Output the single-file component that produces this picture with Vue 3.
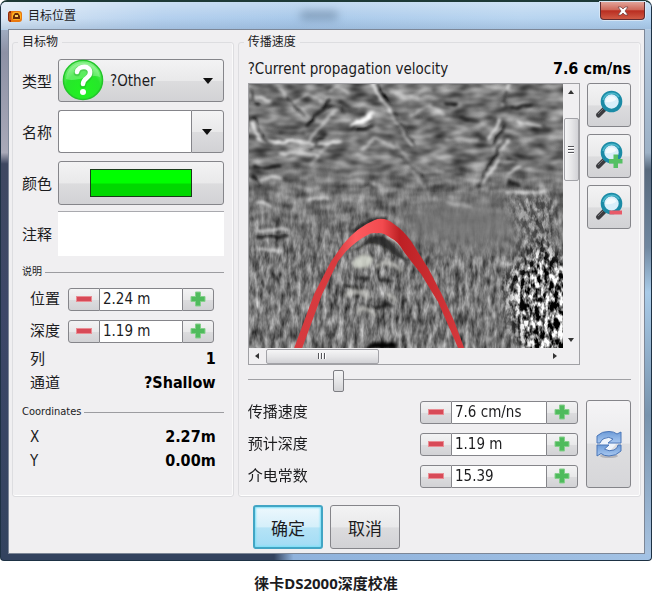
<script setup>
import { ref, reactive } from 'vue'

const kind = ref('?Other')
const name = ref('')
const note = ref('')
const sliderValue = ref(23)

const description = reactive([
  { id: 'position', label: '位置', value: '2.24 m' },
  { id: 'depth', label: '深度', value: '1.19 m' },
])
const facts = [
  { label: '列', value: '1' },
  { label: '通道', value: '?Shallow' },
]
const coordinates = [
  { label: 'X', value: '2.27m' },
  { label: 'Y', value: '0.00m' },
]
const params = reactive([
  { id: 'velocity', label: '传播速度', value: '7.6 cm/ns', step: 0.1, digits: 1 },
  { id: 'expected', label: '预计深度', value: '1.19 m', step: 0.01, digits: 2 },
  { id: 'dielectric', label: '介电常数', value: '15.39', step: 0.01, digits: 2 },
])
const zoomTools = [
  { id: 'reset', label: '缩放' },
  { id: 'in', label: '放大' },
  { id: 'out', label: '缩小' },
]

function bump(item, direction) {
  const [number, ...unit] = item.value.split(' ')
  const next = (parseFloat(number) + direction * (item.step ?? 0.01)).toFixed(item.digits ?? 2)
  item.value = [next, ...unit].join(' ')
}
</script>

<template>
  <main class="page">
    <section class="window">
      <header class="titlebar">
        <svg class="app-icon" viewBox="0 0 14 12" aria-hidden="true">
          <rect x="0" y="1" width="14" height="11" rx="3" fill="#e9780f" />
          <path d="M3 1H2Q0 2 0 4v5q0 2 2 3h1Z" fill="#8e2a10" />
          <rect x="4" y="2" width="9" height="8" rx="3" fill="#ffb321" />
          <path d="M5 9V6l2-3h3l2 3v3H5Z" fill="#6b2c08" />
          <path d="M7 5h3v2H7Z" fill="#ffd35a" />
          <path d="M2 3v7" stroke="#e98a2e" />
        </svg>
        <h1 class="title">目标位置</h1>
        <span class="smudge"></span>
        <button class="close" type="button" aria-label="关闭">
          <svg viewBox="0 0 12 10" aria-hidden="true">
            <path d="M1 1h3l2 2 2-2h3L8 5l3 4H8L6 7 4 9H1l3-4Z" fill="#fff" stroke="#6d3a3a" stroke-width=".7" />
          </svg>
        </button>
      </header>

      <div class="body">
        <div class="groups">
          <fieldset class="group">
            <legend>目标物</legend>
            <div class="form">
              <label for="kind">类型</label>
              <div class="kind">
                <select id="kind" v-model="kind">
                  <option>?Other</option>
                </select>
                <svg class="kind-icon" viewBox="0 0 42 42" aria-hidden="true">
                  <defs>
                    <radialGradient id="ball" cx=".5" cy=".75" r=".75">
                      <stop offset="0" stop-color="#21f321" />
                      <stop offset=".6" stop-color="#27e62b" />
                      <stop offset="1" stop-color="#8df28d" />
                    </radialGradient>
                  </defs>
                  <circle cx="21" cy="21" r="19.5" fill="url(#ball)" stroke="#23c52a" stroke-width="1.6" />
                  <path d="M4 20C5 8 14 4 21 4s16 4 17 14C29 14 15 24 4 20Z" fill="#fff" opacity=".25" />
                  <path d="M15 14c1-7 14-7 13 1 0 5-7 5-7 11" fill="none" stroke="#26a72b" stroke-width="6.5" stroke-linecap="round" opacity=".4" />
                  <path d="M15 13c1-7 14-7 13 1 0 5-7 5-7 11" fill="none" stroke="#fff" stroke-width="4.6" stroke-linecap="round" />
                  <circle cx="21" cy="33" r="3" fill="#fff" />
                </svg>
                <svg class="arrow over" viewBox="0 0 10 6" aria-hidden="true"><path d="M0 0h10L5 6Z" fill="#111" /></svg>
              </div>

              <label for="name">名称</label>
              <div class="combo">
                <input id="name" v-model="name" type="text" />
                <button type="button" aria-label="展开">
                  <svg class="arrow" viewBox="0 0 10 6" aria-hidden="true"><path d="M0 0h10L5 6Z" fill="#111" /></svg>
                </button>
              </div>

              <label for="color">颜色</label>
              <button id="color" class="color" type="button"><span class="swatch"></span></button>

              <label for="note">注释</label>
              <textarea id="note" v-model="note"></textarea>
            </div>

            <h2 class="divider">说明</h2>
            <div class="details">
              <div v-for="item in description" :key="item.id" class="spin-row">
                <label :for="item.id">{{ item.label }}</label>
                <div class="spin">
                  <button type="button" aria-label="减少" @click="bump(item, -1)"><span class="minus"></span></button>
                  <input :id="item.id" v-model="item.value" type="text" />
                  <button type="button" aria-label="增加" @click="bump(item, 1)">
                    <svg class="plus" viewBox="0 0 16 16" aria-hidden="true"><path d="M5.500 1h5v4.500H15v5h-4.500V15h-5v-4.500H1v-5h4.500Z" fill="#4fbb5c" stroke="#86cf8c" /></svg>
                  </button>
                </div>
              </div>
            </div>
            <dl class="facts">
              <div v-for="fact in facts" :key="fact.label"><dt>{{ fact.label }}</dt><dd>{{ fact.value }}</dd></div>
            </dl>

            <h2 class="divider latin">Coordinates</h2>
            <dl class="facts">
              <div v-for="fact in coordinates" :key="fact.label"><dt>{{ fact.label }}</dt><dd>{{ fact.value }}</dd></div>
            </dl>
          </fieldset>

          <fieldset class="group">
            <legend>传播速度</legend>
            <p class="current"><span>?Current propagation velocity</span><strong>7.6 cm/ns</strong></p>

            <div class="viewer">
              <div class="scan">
                <svg class="radargram" viewBox="0 0 314 264" preserveAspectRatio="none" role="img" aria-label="雷达剖面">
                  <defs>
                    <filter id="layers" x="0" y="0" width="1" height="1" color-interpolation-filters="sRGB">
                      <feTurbulence type="fractalNoise" baseFrequency=".05 .1" numOctaves="2" seed="21" />
                      <feColorMatrix values=".8 0 0 0 .06  .8 0 0 0 .06  .8 0 0 0 .06  0 0 0 0 1" />
                    </filter>
                    <filter id="grain" x="0" y="0" width="1" height="1" color-interpolation-filters="sRGB">
                      <feTurbulence type="fractalNoise" baseFrequency=".19 .07" numOctaves="3" seed="4" />
                      <feColorMatrix values="1 0 0 0 -.03  1 0 0 0 -.03  1 0 0 0 -.03  0 0 0 0 1" />
                    </filter>
                    <filter id="speckle" x="0" y="0" width="1" height="1" color-interpolation-filters="sRGB">
                      <feTurbulence type="fractalNoise" baseFrequency=".21 .11" numOctaves="3" seed="15" />
                      <feColorMatrix values="3.2 0 0 0 -1.15  3.2 0 0 0 -1.15  3.2 0 0 0 -1.15  0 0 0 0 1" />
                    </filter>
                    <filter id="rough" x="-.1" y="-.1" width="1.2" height="1.2">
                      <feTurbulence type="fractalNoise" baseFrequency=".1" numOctaves="2" seed="3" result="n" />
                      <feDisplacementMap in="SourceGraphic" in2="n" scale="6" xChannelSelector="R" yChannelSelector="G" />
                      <feGaussianBlur stdDeviation="1.5" />
                    </filter>
                    <filter id="soft"><feGaussianBlur stdDeviation="12" /></filter>
                    <filter id="edge"><feGaussianBlur stdDeviation="8" /></filter>
                    <filter id="hair"><feGaussianBlur stdDeviation=".8" /></filter>
                    <linearGradient id="fade" x1="0" y1="0" x2="0" y2="1">
                      <stop offset=".3" stop-color="#000" />
                      <stop offset=".68" stop-color="#fff" />
                    </linearGradient>
                    <mask id="lower"><rect width="314" height="264" fill="url(#fade)" /></mask>
                    <mask id="corner">
                      <g filter="url(#edge)" fill="#fff">
                        <path d="M258 112h48v70h24v110h-50l-18-60-8-36 26-20Z" opacity=".4" />
                        <path d="M258 190l32-30 40 26v110h-44l-24-56Z" />
                      </g>
                    </mask>
                    <linearGradient id="arc" x1="45" y1="0" x2="215" y2="0" gradientUnits="userSpaceOnUse">
                      <stop offset="0" stop-color="#d63a3e" />
                      <stop offset=".25" stop-color="#d83b3f" />
                      <stop offset=".36" stop-color="#fb5c60" />
                      <stop offset=".52" stop-color="#f24a4e" />
                      <stop offset=".62" stop-color="#bd2024" />
                      <stop offset="1" stop-color="#d63a3e" />
                    </linearGradient>
                  </defs>
                  <rect width="314" height="264" filter="url(#layers)" />
                  <g mask="url(#lower)"><rect width="314" height="264" filter="url(#grain)" opacity=".85" /></g>
                  <ellipse cx="215" cy="140" rx="68" ry="26" fill="#777" opacity=".85" filter="url(#soft)" />
                  <g mask="url(#corner)"><rect width="314" height="264" filter="url(#speckle)" /></g>

                  <g filter="url(#rough)" fill="none">
                    <g stroke="#f0f0f0" stroke-width="3">
                      <path d="M8 54q12 6 24 4t28 1 32-2M2 40l8 12M122 0l16 22 26 40" />
                      <path d="M58 58l22-26 10-10M80 6q10-6 20 4M30 4l30 30" opacity=".6" />
                      <path d="M8 98q12-6 26-4M58 118q10-8 22-2M6 146h34M8 166h26M0 10l22 8M6 118l18 4M30 70q16-4 40 2" opacity=".75" />
                      <path d="M260 0l-8 22M252 34l-14 24M260 56l-8 10M250 74l-16 24" opacity=".85" />
                      <path d="M256 108h40M258 90l14-8M268 38l24 4" opacity=".8" />
                      <path d="M112 66l14-12 20 10M160 32l20-10 16 10M40 20l18-10 14 8M140 8l30 6M196 56h34" opacity=".55" />
                      <path d="M196 118l26 6M146 58l30 46M60 82l20-22M90 100q14-8 26 0M160 12l22-6" opacity=".4" />
                    </g>
                    <g stroke="#000" stroke-width="3">
                      <path d="M126 0l15 23" stroke-width="4" />
                      <path d="M2 6l8 16M4 34l10 22 12 5M60 40l20-24" opacity=".75" />
                      <path d="M4 84l28-2M4 92l8 8M6 153l34-1M196 20h12M66 36l-10 6" opacity=".9" />
                      <path d="M258 6l-5 14M254 42l-10 18M256 56l-18 28-8 20M143 28l22 34" opacity=".75" />
                      <path d="M106 46l18-3M262 24l22-3M258 98l14 4M258 74l10 3M38 12l18 20" opacity=".8" />
                      <path d="M60 68l16-18M112 104q6-8 14 2M150 70l24 24M74 26q10-10 22 2M30 48l26 2M90 18l16 8M210 34l20 4" opacity=".5" />
                      <path d="M106 194h14M130 196h16M122 222h16M96 202l14 4M134 218l10 4" opacity=".7" />
                    </g>
                    <path d="M102 42q14-14 22-13-4 10-22 13Z" fill="#fff" stroke="#fff" stroke-width="2" />
                    <path d="M104 178q9-10 20-4-4 12-18 10Z" fill="#d9dcd2" stroke="#c9ccc2" stroke-width="2" opacity=".85" />
                    <path d="M108 228q10-7 18 2M128 182q12-8 24 6M94 212q16-8 26 0M136 210l12 6" stroke="#d2d2cd" stroke-width="4" opacity=".65" />
                    <path d="M117 264q14-7 30-1" stroke="#000" stroke-width="5" />
                  </g>
                  <g filter="url(#hair)">
                    <path d="M104 148q16-14 34-13" fill="none" stroke="#161616" stroke-width="4" opacity=".8" />
                    <path d="M97 168q14-3 22-14 10-5 19 0l22 24q-12-4-22-13-12-8-22-4-8 6-19 7Z" fill="#20211e" opacity=".8" />
                    <path d="M139 152q12 5 22 21" fill="none" stroke="#ddd6d2" stroke-width="3" />
                  </g>
                  <path d="M45 264 65 210 82 177 94 160Q108 143 125 136q10-4 20 4 9 6 17 17l17 27 13 25 13 28 10 27h-6l-20-46-17-28-17-22q-7-12-13-14-8-6-14-5-6-1-10 2-10 5-21 16L89 177 73 210 53 264Z" fill="url(#arc)" />
                </svg>
                <div class="scroll vertical">
                  <button type="button" aria-label="向上"><svg viewBox="0 0 6 4" aria-hidden="true"><path d="M0 4 3 0l3 4Z" fill="#333" /></svg></button>
                  <span class="thumb"><i></i><i></i><i></i></span>
                  <button type="button" aria-label="向下"><svg viewBox="0 0 6 4" aria-hidden="true"><path d="M0 0h6L3 4Z" fill="#333" /></svg></button>
                </div>
                <div class="scroll horizontal">
                  <button type="button" aria-label="向左"><svg viewBox="0 0 4 6" aria-hidden="true"><path d="M4 0 0 3l4 3Z" fill="#333" /></svg></button>
                  <span class="thumb"><i></i><i></i><i></i></span>
                  <button type="button" aria-label="向右"><svg viewBox="0 0 4 6" aria-hidden="true"><path d="M0 0l4 3-4 3Z" fill="#333" /></svg></button>
                </div>
              </div>

              <div class="tools">
                <button v-for="tool in zoomTools" :key="tool.id" type="button" :aria-label="tool.label">
                  <svg viewBox="0 0 32 32" aria-hidden="true">
                    <path d="M12 19.500 5.500 26" stroke="#3c3c40" stroke-width="5" stroke-linecap="round" />
                    <path d="M11 19 5 25" stroke="#77777b" stroke-width="1" />
                    <circle cx="18.500" cy="12.500" r="9" fill="#d9effa" stroke="#1b8ba6" stroke-width="3.600" />
                    <path d="M10 11a9 9 0 0 1 16-3" fill="none" stroke="#4cb8cc" stroke-width="1.500" />
                    <path d="M12.500 13a6 6 0 0 1 11-3q-4 4-11 3Z" fill="#fff" opacity=".65" />
                    <path v-if="tool.id === 'in'" d="M20.500 14.500h4.500v4.500h4.500v4.500H25V28h-4.500v-4.500H16V19h4.500Z" fill="#55c063" />
                    <path v-if="tool.id === 'out'" d="M16.500 19.500H29v4H16.500Z" fill="#e85a68" />
                  </svg>
                </button>
              </div>
            </div>

            <input v-model="sliderValue" class="slider" type="range" min="0" max="100" aria-label="传播速度" />

            <div class="params">
              <div class="param-list">
                <div v-for="item in params" :key="item.id" class="spin-row wide">
                  <label :for="item.id">{{ item.label }}</label>
                  <div class="spin">
                    <button type="button" aria-label="减少" @click="bump(item, -1)"><span class="minus"></span></button>
                    <input :id="item.id" v-model="item.value" type="text" />
                    <button type="button" aria-label="增加" @click="bump(item, 1)">
                      <svg class="plus" viewBox="0 0 16 16" aria-hidden="true"><path d="M5.500 1h5v4.500H15v5h-4.500V15h-5v-4.500H1v-5h4.500Z" fill="#4fbb5c" stroke="#86cf8c" /></svg>
                    </button>
                  </div>
                </div>
              </div>
              <button class="refresh" type="button" aria-label="刷新">
                <svg viewBox="0 0 28 28" aria-hidden="true">
                  <defs>
                    <linearGradient id="blue" x1="0" y1="0" x2="0" y2="1">
                      <stop offset="0" stop-color="#6c9bd8" />
                      <stop offset="1" stop-color="#a9c8f0" />
                    </linearGradient>
                  </defs>
                  <ellipse cx="14" cy="26" rx="9" ry="2" fill="#b5b5ba" />
                  <path d="M5 13 10 8q5-3 8 1l3 5-5 6q-5 2-8-2Z" fill="#eef4fc" />
                  <g fill="url(#blue)" stroke="#4a76b8" stroke-linejoin="round">
                    <path d="M2 13V6Q7 1 14 1.500q5 0 8 2.500l4-2v11H13l5-4Q14 6 9 8.500 6 10 5 13Z" />
                    <path d="M26 15v6q-5 5-12 5-5 0-8-2.500L2 26V15h12l-4.500 4q4.500 3 9.500 1 4-2 4-5Z" />
                  </g>
                </svg>
              </button>
            </div>
          </fieldset>
        </div>

        <div class="actions">
          <button class="primary" type="button">确定</button>
          <button type="button">取消</button>
        </div>
      </div>
    </section>
    <p class="caption">徕卡DS2000深度校准</p>
  </main>
</template>

<style>
body {
  margin: 0;
  background: #fff;
}
</style>

<style scoped>
* {
  box-sizing: border-box;
}

.page {
  padding-right: 2px;
  font-family: "DejaVu Sans Condensed", "Noto Sans CJK SC", sans-serif;
  font-size: 15px;
  color: #1c1c1e;
}

button,
input,
select,
textarea {
  margin: 0;
  font: inherit;
  color: inherit;
}

button,
select {
  display: flex;
  align-items: center;
  justify-content: center;
  padding: 0;
  border: 1px solid #85858a;
  border-radius: 3px;
  background: linear-gradient(#f3f3f4, #e9e9ea 50%, #dcdcde 52%, #d2d2d5);
}

h1,
h2,
p,
dl,
dd {
  margin: 0;
}

.window {
  padding: 0 6px 6px 7px;
  border: 1px solid #1d3144;
  border-top: 2px solid #1d3936;
  border-radius: 7px 7px 4px 4px;
  background:
    linear-gradient(#b6cfe8, #b6cfe8) top / 100% 28px no-repeat,
    linear-gradient(90deg, #33435f 42%, #8fb2dc 45%, #a3c2e4) bottom / 100% 6px no-repeat,
    linear-gradient(#b9cee4, #8d91a5 9%, #a9a9b8 27%, #3f4861 29%, #3d4768 55%, #33435f) left / 7px 100% no-repeat,
    linear-gradient(#b9cee4, #9db1c6 27%, #58697d 30%, #7188a0 44%, #a9cbe8 52%, #7893ad 74%, #a9c4e2) right / 6px 100% no-repeat;
}

.titlebar {
  position: relative;
  display: flex;
  align-items: center;
  height: 27px;
  margin: 0 -6px 0 -7px;
  padding-left: 7px;
  border-radius: 5px 5px 0 0;
  background:
    linear-gradient(rgba(255, 255, 255, .3), rgba(255, 255, 255, 0) 60%, rgba(120, 150, 185, .3)),
    linear-gradient(90deg, #dbe8f5, #b4d0ee 25%, #a9c9ea 45%, #b9d5f0 80%, #b2d2f0);
}

.app-icon {
  width: 14px;
  height: 12px;
}

.title {
  margin-left: 6px;
  font-size: 12px;
  font-weight: 400;
  line-height: 16px;
}

.smudge {
  position: absolute;
  top: 9px;
  left: 46%;
  width: 38px;
  height: 9px;
  border-radius: 4px;
  background: #57708c;
  opacity: .5;
  filter: blur(4px);
}

.close {
  align-self: flex-start;
  width: 45px;
  height: 18px;
  margin-left: auto;
  margin-right: 6px;
  border: 1px solid #5e2b31;
  border-top: 0;
  border-radius: 0 0 4px 4px;
  background: linear-gradient(#e2a398, #cf6a5b 45%, #b92e21 52%, #cf5a45);
  box-shadow: 0 0 0 1px #d7e5f3;
}

.close svg {
  width: 12px;
  height: 10px;
}

.body {
  padding: 4px 3px;
  border: 1px solid #7d8797;
  background: #f0eff1;
}

.groups {
  display: grid;
  grid-template-columns: minmax(0, 222fr) minmax(0, 404fr);
  gap: 4px;
}

.group {
  min-width: 0;
  margin: 0;
  padding: 9px 9px 8px;
  border: 1px solid #dddde0;
  border-radius: 3px;
  box-shadow: inset 0 -1px #fff, inset -1px 0 #fafafa;
}

legend {
  margin-left: -4px;
  padding: 0 4px;
  font-size: 12px;
  line-height: 16px;
}

.form {
  display: grid;
  grid-template-columns: 36px minmax(0, 1fr);
  grid-auto-rows: 43px;
  gap: 8px 0;
  align-items: center;
}

.kind {
  position: relative;
  height: 100%;
}

.kind select {
  width: 100%;
  height: 100%;
  padding-left: 51px;
  appearance: none;
}

.kind-icon {
  position: absolute;
  top: 0;
  left: 4px;
  width: 42px;
  height: 42px;
  pointer-events: none;
}

.arrow {
  width: 10px;
  height: 6px;
}

.over {
  position: absolute;
  top: 19px;
  right: 11px;
  pointer-events: none;
}

.combo {
  display: flex;
  height: 100%;
}

.combo input {
  flex: 1;
  min-width: 0;
  padding: 0 6px;
  border: 1px solid #85858a;
  border-right: 0;
  border-radius: 3px 0 0 3px;
  background: #fff;
}

.combo button {
  width: 33px;
  border-radius: 0 3px 3px 0;
}

.color {
  width: 100%;
  height: 44px;
}

.swatch {
  width: 102px;
  height: 28px;
  border: 1px solid #1b3a1b;
  background: linear-gradient(#00ff00 50%, #00d800 54%);
}

textarea {
  display: block;
  width: 100%;
  height: 45px;
  border: 0;
  border-top: 1px solid #a9a9ae;
  background: #fff;
  resize: none;
}

.divider {
  display: flex;
  align-items: center;
  gap: 3px;
  margin-top: 10px;
  font-size: 10px;
  font-weight: 400;
  line-height: 14px;
}

.divider::after {
  content: "";
  flex: 1;
  height: 1px;
  background: #9c9ca0;
}

.divider.latin {
  font-size: 11px;
}

.details {
  display: grid;
  gap: 8px;
  padding: 8px 10px 4px 8px;
}

.spin-row {
  display: grid;
  grid-template-columns: 38px minmax(0, 1fr);
  align-items: center;
  line-height: 24px;
}

.spin-row.wide {
  grid-template-columns: minmax(0, 1fr) 158px;
}

.spin {
  display: flex;
  height: 23px;
}

.spin button {
  flex: none;
  width: 32px;
}

.spin button:first-child {
  border-radius: 3px 0 0 3px;
}

.spin button:last-child {
  border-radius: 0 3px 3px 0;
}

.spin input {
  flex: 1;
  min-width: 0;
  padding: 0 3px;
  border: solid #85858a;
  border-width: 1px 0;
  background: #fff;
}

.minus {
  width: 16px;
  height: 6px;
  border: 1px solid #e98d94;
  background: #d84a57;
}

.plus {
  width: 16px;
  height: 16px;
}

.facts {
  padding: 0 8px;
  line-height: 24px;
}

.divider.latin + .facts {
  padding-top: 6px;
}

.facts div {
  display: flex;
  justify-content: space-between;
}

.facts dd {
  font-size: 16px;
  font-weight: 700;
  color: #000;
}

.current {
  display: flex;
  justify-content: space-between;
  margin-bottom: 4px;
  line-height: 20px;
}

.current strong {
  font-size: 16px;
  color: #000;
}

.viewer {
  display: flex;
  gap: 7px;
}

.scan {
  flex: 1;
  display: grid;
  grid-template-columns: minmax(0, 1fr) 16px;
  min-width: 0;
  border: 1px solid #a0a0a4;
  background: #f0eff1;
}

.radargram {
  display: block;
  width: 100%;
  aspect-ratio: 314 / 264;
}

.scroll {
  display: flex;
  align-items: center;
}

.scroll button {
  flex: none;
  width: 16px;
  height: 16px;
  border: 0;
  background: none;
}

.scroll svg {
  width: 6px;
  height: 6px;
}

.scroll .thumb {
  display: flex;
  align-items: center;
  justify-content: center;
  gap: 1px;
  border: 1px solid #a3a3a8;
  border-radius: 2px;
}

.vertical {
  flex-direction: column;
}

.vertical .thumb {
  flex-direction: column;
  width: 15px;
  height: 24%;
  margin-top: 18px;
  background: linear-gradient(90deg, #f5f5f6, #e6e6e8 50%, #d2d2d6);
}

.horizontal .thumb {
  width: 36%;
  height: 15px;
  margin-left: 1px;
  background: linear-gradient(#f5f5f6, #e6e6e8 50%, #d2d2d6);
}

.thumb i {
  width: 2px;
  height: 6px;
  border-left: 1px solid #55555a;
  background: #fff;
}

.vertical .thumb i {
  width: 6px;
  height: 2px;
  border-top: 1px solid #55555a;
  border-left: 0;
}

.scroll button:last-child {
  margin-left: auto;
}

.vertical button:last-child {
  margin-top: auto;
  margin-left: 0;
}

.tools {
  display: flex;
  flex-direction: column;
  gap: 7px;
}

.tools button {
  width: 44px;
  height: 44px;
}

.tools svg {
  width: 32px;
  height: 32px;
}

.slider {
  display: block;
  width: 100%;
  height: 22px;
  margin: 5px 0 8px;
  background: linear-gradient(#a0a0a4, #a0a0a4) 0 9px / 100% 1px no-repeat;
  appearance: none;
}

.slider::-webkit-slider-thumb {
  width: 11px;
  height: 22px;
  border: 1px solid #7d7d82;
  border-radius: 2px;
  background: linear-gradient(#f4f4f5, #e6e6e8 50%, #d3d3d6);
  appearance: none;
}

.params {
  display: flex;
  gap: 8px;
}

.param-list {
  flex: 1;
  display: flex;
  flex-direction: column;
  justify-content: space-between;
}

.refresh {
  width: 45px;
  height: 88px;
  background: linear-gradient(#f5f4f6, #eaeaec 49%, #dedee0 50%, #d6d6d9);
}

.refresh svg {
  width: 28px;
  height: 28px;
}

.actions {
  display: flex;
  justify-content: center;
  gap: 7px;
  padding-top: 8px;
}

.actions button {
  width: 70px;
  height: 44px;
  font-size: 17px;
}

.actions .primary {
  border: 2px solid #42a5c4;
  background: linear-gradient(#edf8fd, #d5effa 50%, #b5e3f6 52%, #a2dcf5);
  box-shadow: inset 0 0 2px 1px #7be0f8;
}

.caption {
  margin-top: 10px;
  font-family: "Noto Sans", "Noto Sans CJK SC", sans-serif;
  font-weight: 700;
  line-height: 24px;
  text-align: center;
}
</style>
